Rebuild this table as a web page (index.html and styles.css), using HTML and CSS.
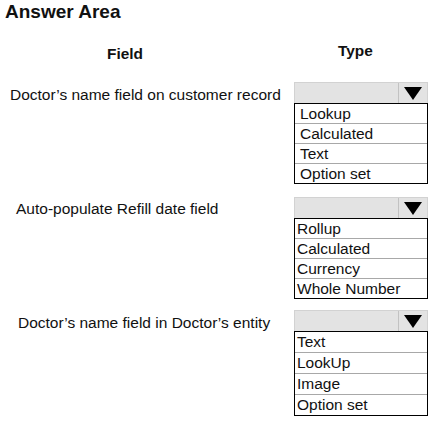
FILE: index.html
```html
<!DOCTYPE html>
<html>
<head>
<meta charset="utf-8">
<link rel="stylesheet" href="styles.css">
</head>
<body>
<h1 class="title">Answer Area</h1>
<div class="heads">
  <span class="head head-field">Field</span>
  <span class="head head-type">Type</span>
</div>
<div class="rows">
  <div class="row row-1">
    <div class="label label-1">Doctor’s name field on customer record</div>
    <div class="dropdown">
      <div class="select"><span class="value"></span><span class="arrow"><svg width="18" height="13" viewBox="0 0 18 13"><path d="M0 0H18L9 13Z" fill="#000"/></svg></span></div>
      <ul class="list pad-wide">
        <li>Lookup</li>
        <li>Calculated</li>
        <li>Text</li>
        <li>Option set</li>
      </ul>
    </div>
  </div>
  <div class="row row-2">
    <div class="label label-2">Auto-populate Refill date field</div>
    <div class="dropdown">
      <div class="select"><span class="value"></span><span class="arrow"><svg width="18" height="13" viewBox="0 0 18 13"><path d="M0 0H18L9 13Z" fill="#000"/></svg></span></div>
      <ul class="list">
        <li>Rollup</li>
        <li>Calculated</li>
        <li>Currency</li>
        <li>Whole Number</li>
      </ul>
    </div>
  </div>
  <div class="row row-3">
    <div class="label label-3">Doctor’s name field in Doctor’s entity</div>
    <div class="dropdown">
      <div class="select"><span class="value"></span><span class="arrow"><svg width="18" height="13" viewBox="0 0 18 13"><path d="M0 0H18L9 13Z" fill="#000"/></svg></span></div>
      <ul class="list tall">
        <li>Text</li>
        <li>LookUp</li>
        <li>Image</li>
        <li>Option set</li>
      </ul>
    </div>
  </div>
</div>
</body>
</html>
```
FILE: styles.css
```css
html, body {
  margin: 0;
  padding: 0;
  background: #fff;
}
body {
  font-family: "Liberation Sans", Arial, sans-serif;
  color: #111;
  width: 434px;
  height: 426px;
  overflow: hidden;
}
.title {
  margin: 0;
  padding: 1px 0 0 5px;
  font-size: 19px;
  line-height: 22px;
  font-weight: bold;
}
.heads {
  display: flex;
  align-items: flex-start;
  margin-top: 18px;
  font-size: 15.4px;
  line-height: 20px;
  font-weight: bold;
}
.head-field {
  margin-left: 107px;
  margin-top: 3px;
}
.head-type {
  margin-left: 195px;
}
.rows {
  display: flex;
  flex-direction: column;
  margin-top: 18px;
}
.row {
  display: flex;
  align-items: flex-start;
  font-size: 15.5px;
}
.row-2 { margin-top: 13px; }
.row-3 { margin-top: 11px; }
.label {
  width: 294px;
  box-sizing: border-box;
  line-height: 20px;
  padding-top: 3px;
}
.label-1 { padding-left: 10px; }
.label-2 { padding-left: 16px; padding-top: 2px; }
.label-3 { padding-left: 18px; }
.dropdown {
  width: 134px;
}
.select {
  display: flex;
  height: 21px;
  box-sizing: border-box;
  background: #e3e3e3;
  border: 1px solid #d2d2d2;
  border-bottom: none;
}
.value {
  flex: 1;
}
.arrow {
  width: 28px;
  border-left: 1px solid #c2c2c2;
  display: flex;
  align-items: center;
  justify-content: center;
  padding-top: 1px;
}
.arrow svg {
  display: block;
}
.list {
  list-style: none;
  margin: 0;
  padding: 0;
  border: 1px solid #000;
  width: 134px;
  box-sizing: border-box;
}
.list li {
  height: 19px;
  line-height: 19px;
  padding-left: 2px;
  border-top: 1px solid #a8a8a8;
}
.list li:first-child {
  border-top: none;
}
.list.pad-wide li {
  padding-left: 5px;
}
.list.tall li {
  height: 20px;
  line-height: 20px;
}
```
